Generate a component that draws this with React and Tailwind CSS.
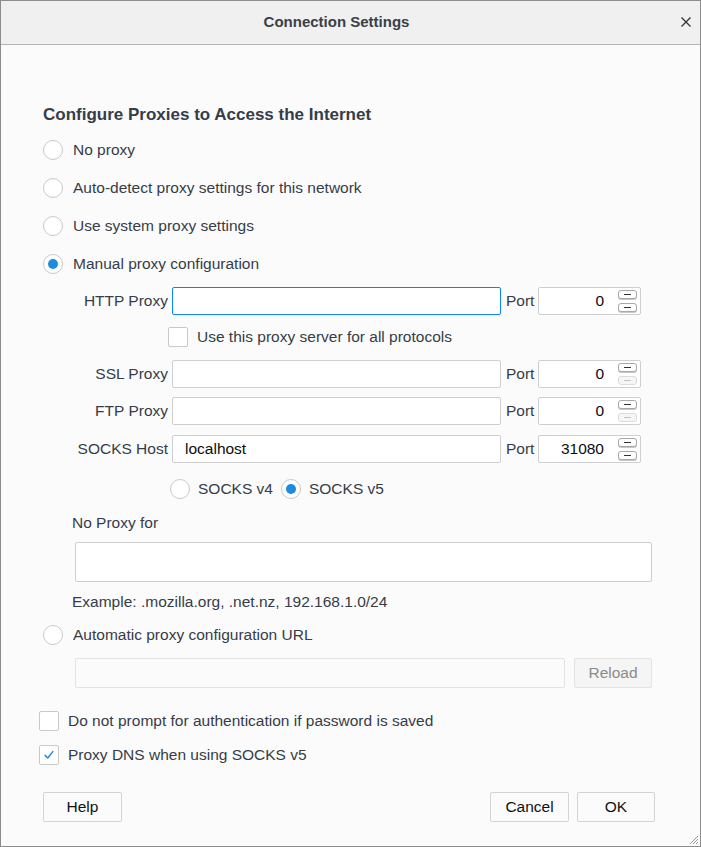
import { useState } from "react";

const font = { fontFamily: '"Liberation Sans", Arial, sans-serif' };

function Radio({ checked }) {
  return (
    <span className="w-[20px] h-[20px] rounded-full border border-[#c9c9cc] bg-white flex items-center justify-center shrink-0">
      {checked && <span className="w-[10px] h-[10px] rounded-full bg-[#1d8be0]" />}
    </span>
  );
}

function Checkbox({ checked }) {
  return (
    <span className="w-[20px] h-[20px] rounded-[2px] border border-[#c9c9cc] bg-white flex items-center justify-center shrink-0">
      {checked && (
        <svg width="12" height="12" viewBox="0 0 12 12">
          <path d="M2.2 6.4 L4.8 9 L9.8 2.6" fill="none" stroke="#1d8be0" strokeWidth="1.5" strokeLinecap="round" strokeLinejoin="round" />
        </svg>
      )}
    </span>
  );
}

function StepBtn({ dim }) {
  return (
    <span
      className={
        "w-[19px] h-[9px] rounded-[3px] border flex items-center justify-center " +
        (dim ? "border-[#dcdcdc] bg-[#f6f6f6]" : "border-[#a8a8a8] bg-white shadow-[0_1px_0_#c8c8c8]")
      }
    >
      <span className={"w-[7px] h-px " + (dim ? "bg-[#c4c4c4]" : "bg-[#333]")} />
    </span>
  );
}

function ProxyRow({ label, value, port, focused, dimDown, h }) {
  return (
    <div className={"flex items-center " + h}>
      <span className="w-[129px] text-right pr-[4px] text-[15.5px] text-[#363d48]">{label}</span>
      <div
        className={
          "w-[329px] h-[28px] bg-white rounded-[2px] border flex items-center px-[12px] text-[15.5px] text-[#0c0c0d] " +
          (focused ? "border-[#0a84ff]" : "border-[#cfcfd3]")
        }
      >
        {value}
      </div>
      <span className="ml-[5px] w-[32px] text-[15.5px] text-[#363d48]">Port</span>
      <div className="w-[103px] h-[28px] bg-white rounded-[2px] border border-[#cfcfd3] flex items-center text-[15.5px] text-[#0c0c0d]">
        <span className="flex-1 text-right pr-[14px]">{port}</span>
        <div className="flex flex-col gap-[4px] mr-[3px]">
          <StepBtn />
          <StepBtn dim={dimDown} />
        </div>
      </div>
    </div>
  );
}

function Button({ children, w, muted }) {
  return (
    <button
      className={
        "h-[30px] rounded-[2px] border text-[15.5px] " +
        w +
        (muted ? " bg-[#f5f5f5] border-[#e3e3e3] text-[#8a8a8a]" : " bg-[#fbfbfb] border-[#d4d4d4] text-[#111]")
      }
    >
      {children}
    </button>
  );
}

export default function App() {
  const [mode] = useState("manual");

  return (
    <div style={font} className="relative w-[701px] h-[847px] border border-[#8d8d8d] bg-[#fbfbfb] flex flex-col overflow-hidden">
      {/* title bar */}
      <div className="relative h-[44px] bg-[#f0f0f0] border-b border-[#b4b4b4] flex items-center justify-center pr-[28px] shrink-0">
        <span className="text-[15px] font-bold text-[#3a3f48]">Connection Settings</span>
        <svg className="absolute right-[9px] top-[16px]" width="10" height="10" viewBox="0 0 10 10">
          <path d="M0.5 0.5 L9.5 9.5 M9.5 0.5 L0.5 9.5" stroke="#333" strokeWidth="1.3" />
        </svg>
      </div>

      <div className="flex flex-col pl-[42px] pt-[59px] text-[15.5px]">
        <h1 className="h-[22px] leading-[22px] text-[17px] font-bold text-[#363d48]">
          Configure Proxies to Access the Internet
        </h1>

        <div className="flex flex-col mt-[5px]">
          {[
            ["none", "No proxy"],
            ["auto", "Auto-detect proxy settings for this network"],
            ["system", "Use system proxy settings"],
            ["manual", "Manual proxy configuration"],
          ].map(([k, t]) => (
            <div key={k} className="h-[38px] flex items-center gap-[10px] text-[#363d48]">
              <Radio checked={mode === k} />
              <span>{t}</span>
            </div>
          ))}
        </div>

        <ProxyRow label="HTTP Proxy" value="" port="0" focused h="h-[36px]" />
        <div className="h-[36px] flex items-center gap-[9px] ml-[125px] text-[#363d48]">
          <Checkbox />
          <span>Use this proxy server for all protocols</span>
        </div>
        <ProxyRow label="SSL Proxy" value="" port="0" dimDown h="h-[37px]" />
        <ProxyRow label="FTP Proxy" value="" port="0" dimDown h="h-[38px]" />
        <ProxyRow label="SOCKS Host" value="localhost" port="31080" h="h-[38px]" />

        <div className="h-[42px] flex items-center ml-[127px] text-[#363d48]">
          <Radio />
          <span className="ml-[8px]">SOCKS v4</span>
          <span className="ml-[8px]">
            <Radio checked />
          </span>
          <span className="ml-[8px]">SOCKS v5</span>
        </div>

        <div className="h-[26px] flex items-center ml-[29px] text-[#363d48]">No Proxy for</div>
        <div className="mt-[6px] ml-[32px] w-[577px] h-[40px] bg-white border border-[#cfcfd3] rounded-[2px]" />
        <div className="h-[40px] flex items-center ml-[29px] text-[#363d48]">
          Example: .mozilla.org, .net.nz, 192.168.1.0/24
        </div>

        <div className="h-[26px] flex items-center gap-[10px] text-[#363d48]">
          <Radio />
          <span>Automatic proxy configuration URL</span>
        </div>
        <div className="mt-[10px] ml-[32px] flex items-center gap-[9px]">
          <div className="w-[490px] h-[30px] bg-[#fbfbfb] border border-[#e3e3e5] rounded-[2px]" />
          <Button w="w-[78px]" muted>
            Reload
          </Button>
        </div>

        <div className="mt-[16px] -ml-[4px] flex flex-col">
          <div className="h-[34px] flex items-center gap-[9px] text-[#363d48]">
            <Checkbox />
            <span>Do not prompt for authentication if password is saved</span>
          </div>
          <div className="h-[34px] flex items-center gap-[9px] text-[#363d48]">
            <Checkbox checked />
            <span>Proxy DNS when using SOCKS v5</span>
          </div>
        </div>

        <div className="mt-[20px] mr-[45px] flex items-center">
          <Button w="w-[79px]">Help</Button>
          <div className="ml-auto flex gap-[8px]">
            <Button w="w-[79px]">Cancel</Button>
            <Button w="w-[78px]">OK</Button>
          </div>
        </div>
      </div>

      {/* resize grip */}
      <svg className="absolute right-[1px] bottom-[1px]" width="12" height="12" viewBox="0 0 12 12">
        <path d="M11 3 L3 11 M11 6 L6 11 M11 9 L9 11" stroke="#9a9a9a" strokeWidth="1" />
      </svg>
    </div>
  );
}
